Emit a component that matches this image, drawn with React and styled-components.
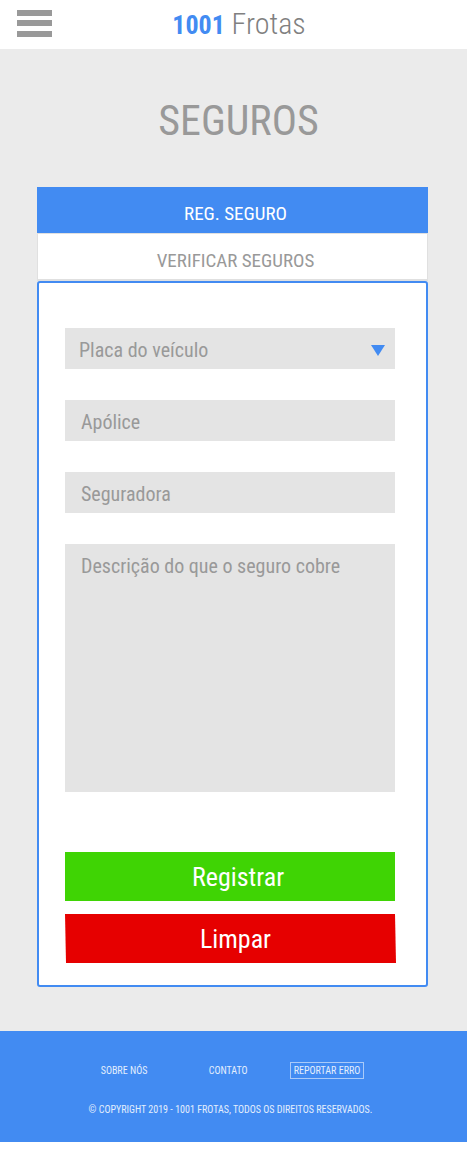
import React from "react";
import styled, { createGlobalStyle } from "styled-components";

const blue = "#428bf2";
const grey = "#999999";

const GlobalStyle = createGlobalStyle`
  *, *::before, *::after { box-sizing: border-box; }
  body {
    margin: 0;
    background: #ffffff;
    font-family: "Agency FB", "Roboto Condensed", "Liberation Sans Narrow", "Liberation Sans", sans-serif;
    font-weight: 400;
  }
  button, input, select, textarea { font: inherit; }
`;

const Page = styled.div`
  margin-right: 1px;
`;

const Header = styled.header`
  display: grid;
  grid-template-columns: 52px 1fr 41px;
  align-items: center;
  height: 49px;
  background: #ffffff;
`;

const MenuButton = styled.button`
  justify-self: end;
  width: 35px;
  height: 27px;
  padding: 0;
  margin-bottom: 2px;
  border: 0;
  background: none;
  cursor: pointer;

  svg { display: block; }
`;

const Logo = styled.a`
  justify-self: center;
  color: #808080;
  font-size: 30px;
  font-weight: 300;
  line-height: 48px;
  text-decoration: none;
  white-space: nowrap;

  strong {
    color: ${blue};
    font-size: 26px;
    font-weight: 700;
  }
`;

const Main = styled.main`
  padding: 40px 39px 44px 37px;
  background: #ebebeb;
`;

const Title = styled.h1`
  margin: 0 0 34px;
  padding-left: 12px;
  color: ${grey};
  font-size: 42px;
  font-weight: 400;
  line-height: 64px;
  text-align: center;
`;

const Tabs = styled.div`
  display: flex;
  flex-direction: column;
`;

const Tab = styled.button`
  height: ${(p) => (p.$active ? 46 : 48)}px;
  padding: 8px 0 0 6px;
  border: ${(p) => (p.$active ? "0" : "1px solid #e0e0e0")};
  border-bottom-width: ${(p) => (p.$active ? 0 : 2)}px;
  background: ${(p) => (p.$active ? blue : "#ffffff")};
  color: ${(p) => (p.$active ? "#ffffff" : grey)};
  font-size: 19px;
  line-height: 32px;
  cursor: pointer;
`;

const Form = styled.form`
  display: flex;
  flex-direction: column;
  gap: 31px;
  padding: 45px 31px 22px 26px;
  border: 2px solid ${blue};
  border-radius: 3px;
  background: #ffffff;
`;

const SelectBox = styled.div`
  position: relative;
  display: flex;

  svg {
    position: absolute;
    top: 17px;
    right: 10px;
    pointer-events: none;
  }
`;

const fieldStyle = `
  display: block;
  width: 100%;
  margin: 0;
  border: 0;
  border-radius: 0;
  background: #e4e4e4;
  color: ${grey};
  font-size: 20px;
  line-height: 32px;
  outline-color: ${blue};
`;

const Select = styled.select`
  ${fieldStyle}
  appearance: none;
  height: 41px;
  padding: 6px 32px 3px 14px;
`;

const Input = styled.input`
  ${fieldStyle}
  height: 41px;
  padding: 6px 16px 3px;
  &::placeholder { color: ${grey}; opacity: 1; }
`;

const TextArea = styled.textarea`
  ${fieldStyle}
  height: 248px;
  padding: 6px 16px;
  resize: none;
  &::placeholder { color: ${grey}; opacity: 1; }
`;

const Actions = styled.div`
  display: flex;
  flex-direction: column;
  gap: 13px;
  margin-top: 29px;
`;

const ActionButton = styled.button`
  height: 49px;
  padding: 0 0 0 16px;
  border: 0;
  background: ${(p) => p.$color};
  color: #ffffff;
  font-size: 26px;
  line-height: 48px;
  cursor: pointer;
`;

const ClearButton = styled(ActionButton)`
  margin-right: -1px;
  padding-left: 10px;
  clip-path: polygon(0 0, calc(100% - 1px) 0, 100% 100%, 1px 100%);
`;

const Footer = styled.footer`
  display: flex;
  flex-direction: column;
  align-items: center;
  gap: 23px;
  padding: 31px 6px 24px 0;
  background: ${blue};
  color: #e3eefd;
  font-size: 10px;
  line-height: 16px;
`;

const FooterNav = styled.nav`
  display: grid;
  grid-template-columns: 108px 81px auto;
  align-items: center;
  justify-content: center;
  padding-left: 4px;
`;

const FooterLink = styled.a`
  color: inherit;
  text-decoration: none;
  white-space: nowrap;
`;

const ReportLink = styled(FooterLink)`
  padding: 0 3px;
  border: 1px solid #a9caf9;
  line-height: 15px;
`;

const Copyright = styled.p`
  margin: 0;
`;

export default function App() {
  return (
    <>
      <GlobalStyle />
      <Page>
        <Header>
          <MenuButton type="button" aria-label="Menu">
            <svg width="35" height="27" viewBox="0 0 35 27" fill={grey} aria-hidden="true">
              <rect width="35" height="6" />
              <rect y="10" width="35" height="6" />
              <rect y="21" width="35" height="6" />
            </svg>
          </MenuButton>
          <Logo href="#"><strong>1001</strong> Frotas</Logo>
        </Header>
        <Main>
          <Title>SEGUROS</Title>
          <Tabs>
            <Tab type="button" $active>REG. SEGURO</Tab>
            <Tab type="button">VERIFICAR SEGUROS</Tab>
          </Tabs>
          <Form onSubmit={(e) => e.preventDefault()}>
            <SelectBox>
              <Select aria-label="Placa do veículo" defaultValue="">
                <option value="">Placa do veículo</option>
              </Select>
              <svg width="14" height="11" viewBox="0 0 14 11" aria-hidden="true">
                <path d="M0 0H14L7 11Z" fill={blue} />
              </svg>
            </SelectBox>
            <Input type="text" aria-label="Apólice" placeholder="Apólice" />
            <Input type="text" aria-label="Seguradora" placeholder="Seguradora" />
            <TextArea
              aria-label="Descrição do que o seguro cobre"
              placeholder="Descrição do que o seguro cobre"
            />
            <Actions>
              <ActionButton type="submit" $color="#3fd404">Registrar</ActionButton>
              <ClearButton type="reset" $color="#e60000">Limpar</ClearButton>
            </Actions>
          </Form>
        </Main>
        <Footer>
          <FooterNav>
            <FooterLink href="#">SOBRE NÓS</FooterLink>
            <FooterLink href="#">CONTATO</FooterLink>
            <ReportLink href="#">REPORTAR ERRO</ReportLink>
          </FooterNav>
          <Copyright>© COPYRIGHT 2019 - 1001 FROTAS, TODOS OS DIREITOS RESERVADOS.</Copyright>
        </Footer>
      </Page>
    </>
  );
}
